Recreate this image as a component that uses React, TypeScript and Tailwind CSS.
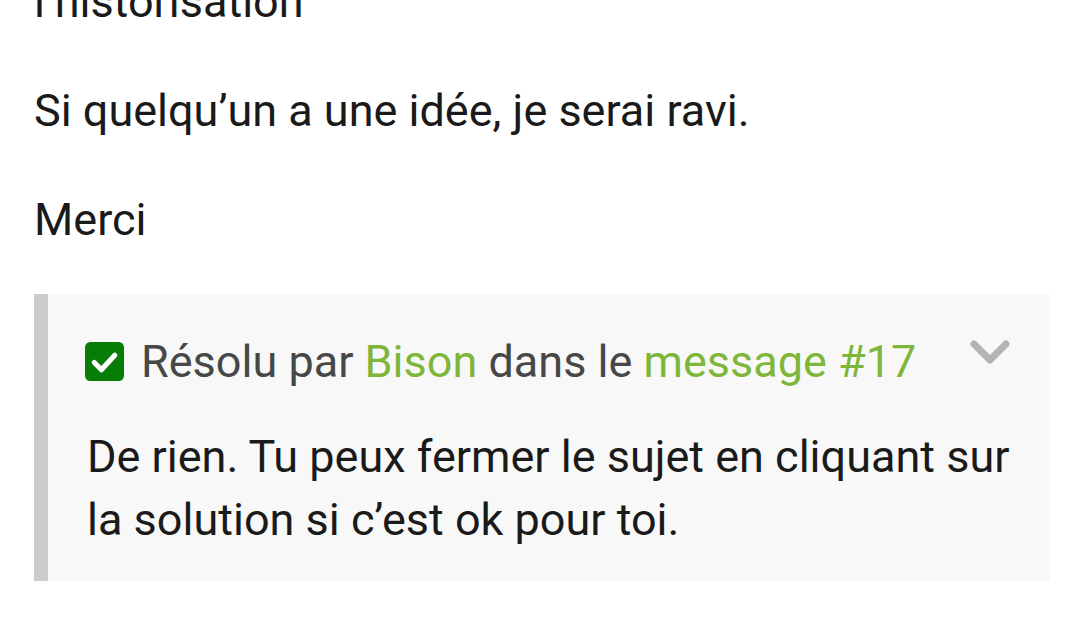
import React from "react";

export default function App() {
  return (
    <div className="w-[1080px] h-[620px] overflow-hidden bg-white font-['Roboto','Liberation_Sans',sans-serif] text-[45px] leading-[63px] text-[#1a1a1a]">
      <div className="pl-[34px] pr-[30px] mt-[-30px]">
        <p>l’historisation</p>
        <p className="mt-[46px]">Si quelqu’un a une idée, je serai ravi.</p>
        <p className="mt-[46px]">Merci</p>
        <blockquote className="mt-[43px] border-l-[14px] border-[#cccccc] bg-[#f8f8f8] pl-[39px] pr-[40px] pt-[36px] pb-[30px]">
          <div className="flex items-center h-[63px]">
            <svg width="39" height="39" viewBox="0 0 38 38" className="shrink-0 -ml-[2px]">
              <rect x="0" y="0" width="38" height="38" rx="5" fill="#077d07" />
              <path d="M9 20 L16 27 L29 13" fill="none" stroke="#ffffff" strokeWidth="5" strokeLinecap="round" strokeLinejoin="round" />
            </svg>
            <span className="ml-[17px] whitespace-nowrap text-[#474747]">
              Résolu par <span className="text-[#7db639]">Bison</span> dans le{" "}
              <span className="text-[#7db639]">message #17</span>
            </span>
            <svg width="40" height="26" viewBox="0 0 40 26" className="ml-auto shrink-0 self-start mt-[10px]">
              <path d="M4 4 L20 20 L36 4" fill="none" stroke="#b4b4b4" strokeWidth="7" strokeLinecap="round" strokeLinejoin="round" />
            </svg>
          </div>
          <p className="mt-[32px] whitespace-nowrap">
            De rien. Tu peux fermer le sujet en cliquant sur
            <br />
            la solution si c’est ok pour toi.
          </p>
        </blockquote>
      </div>
    </div>
  );
}
